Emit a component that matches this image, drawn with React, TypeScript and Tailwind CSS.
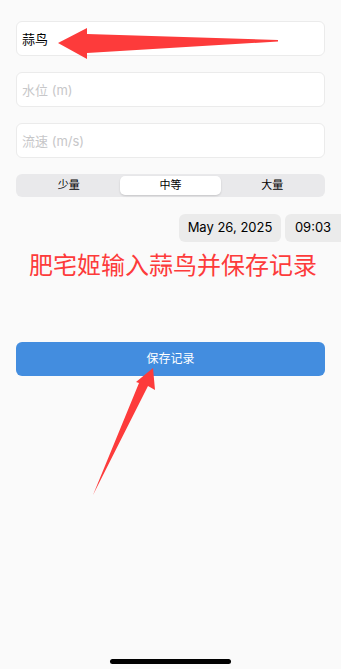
import React, { useState } from 'react';

const levels = ['少量', '中等', '大量'];

export default function App() {
  const [name, setName] = useState('蒜鸟');
  const [level, setLevel] = useState('中等');

  return (
    <div
      className="relative min-h-[669px] w-full bg-[#fafafa] overflow-hidden"
      style={{ fontFamily: 'Inter, "Noto Sans CJK SC", sans-serif' }}
    >
      <div className="flex flex-col px-4 pt-[21px]">
        <input
          value={name}
          onChange={(e) => setName(e.target.value)}
          className="h-[35px] rounded-[6px] border border-[#ebebeb] bg-white px-[5px] text-[13px] text-black outline-none"
        />
        <input
          placeholder="水位 (m)"
          className="mt-[16px] h-[35px] rounded-[6px] border border-[#ebebeb] bg-white px-[5px] text-[13px] outline-none placeholder:text-[#c7c7c9]"
        />
        <input
          placeholder="流速 (m/s)"
          className="mt-[16px] h-[35px] rounded-[6px] border border-[#ebebeb] bg-white px-[5px] text-[13px] outline-none placeholder:text-[#c7c7c9]"
        />

        <div className="mt-[16px] grid h-[23px] grid-cols-3 rounded-[6px] bg-[#e9e9eb] p-[2px]">
          {levels.map((l) => (
            <button
              key={l}
              onClick={() => setLevel(l)}
              className={
                l === level
                  ? 'rounded-[5px] bg-white text-[11px] text-black shadow-[0_1px_2px_rgba(0,0,0,0.15)]'
                  : 'text-[11px] text-black'
              }
            >
              {l}
            </button>
          ))}
        </div>
      </div>

      <div className="mt-[17px] flex justify-end gap-[4px]">
        <div className="flex h-[28px] w-[102px] items-center justify-center rounded-[6px] bg-[#ebebeb] text-[13px] text-black">
          May 26, 2025
        </div>
        <div className="flex h-[28px] w-[56px] items-center justify-center rounded-l-[6px] bg-[#ebebeb] text-[13px] text-black">
          09:03
        </div>
      </div>

      <div className="mt-[9px] pl-[29px] text-[24px] leading-[30px] text-[#fd3b3b]">
        肥宅姬输入蒜鸟并保存记录
      </div>

      <div className="mt-[61px] px-4">
        <button className="flex h-[34px] w-full items-center justify-center rounded-[6px] bg-[#438ddf] text-[12px] text-white">
          保存记录
        </button>
      </div>

      <div className="absolute bottom-[5px] left-[110px] h-[5px] w-[121px] rounded-full bg-black" />

      <svg className="pointer-events-none absolute left-0 top-0" width="341" height="669">
        <polygon points="58,43 87,28 87,34 278,40 278,41.5 87,53 87,59" fill="#fd3b3b" />
        <polygon points="153,368 155,390 148,386 93,495 139,383 136,382" fill="#fd3b3b" />
      </svg>
    </div>
  );
}
